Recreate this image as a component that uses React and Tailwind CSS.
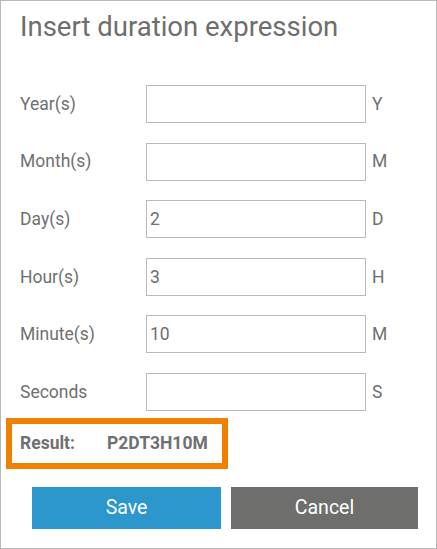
const fields = [
    { label: 'Year(s)', value: '', unit: 'Y' },
    { label: 'Month(s)', value: '', unit: 'M' },
    { label: 'Day(s)', value: '2', unit: 'D' },
    { label: 'Hour(s)', value: '3', unit: 'H' },
    { label: 'Minute(s)', value: '10', unit: 'M' },
    { label: 'Seconds', value: '', unit: 'S' },
];

export default function App() {
    return (
        <div
            className="w-[437px] h-[549px] bg-white border border-[#b8b8b8] text-[#707070]"
            style={{ fontFamily: 'Roboto, "Liberation Sans", sans-serif' }}
        >
            {/* Title */}
            <h1 className="pl-[19px] pt-[10px] text-[27.5px] leading-[32px] text-[#6e6e6e]">
                Insert duration expression
            </h1>

            {/* Fields */}
            <div className="mt-[42px] flex flex-col gap-[19.6px]">
                {fields.map((f) => (
                    <div key={f.label} className="flex items-center h-[38px]">
                        <span className="w-[145px] shrink-0 pl-[19px] text-[17.5px]">{f.label}</span>
                        <input
                            readOnly
                            value={f.value}
                            className="w-[220px] shrink-0 h-[38px] border border-[#b9b9b9] px-[3px] text-[17.5px] text-[#6e6e6e] outline-none"
                        />
                        <span className="ml-[6px] text-[17.5px]">{f.unit}</span>
                    </div>
                ))}
            </div>

            {/* Result */}
            <div className="ml-[5px] mt-[7px] w-[222px] h-[51px] border-[6px] border-[#f08000] flex items-center font-bold text-[17.5px]">
                <span className="w-[95px] shrink-0 pl-[8px]">Result:</span>
                <span>P2DT3H10M</span>
            </div>

            {/* Buttons */}
            <div className="mt-[18px] flex gap-[10px] pl-[31px]">
                <button className="w-[189px] h-[42px] bg-[#2b97cd] text-white text-[19.5px]">Save</button>
                <button className="w-[187px] h-[42px] bg-[#6e6f6d] text-white text-[19.5px]">Cancel</button>
            </div>
        </div>
    );
}
